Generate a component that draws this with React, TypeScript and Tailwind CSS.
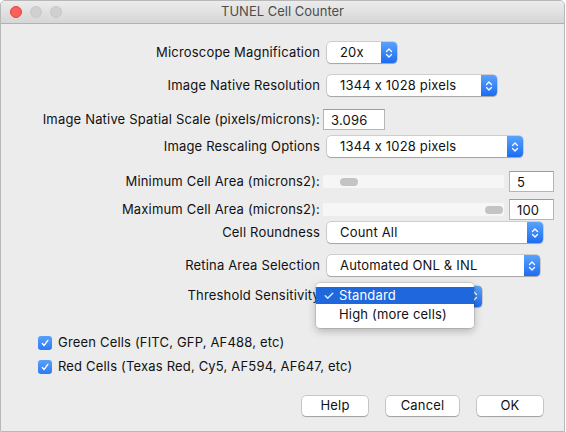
import React from "react";

const font = { fontFamily: "Inter, 'Liberation Sans', sans-serif" };

function Chevrons() {
  return (
    <svg width="8" height="12" viewBox="0 0 8 12" fill="none">
      <path d="M1.5 4.5 L4 2 L6.5 4.5" stroke="white" strokeWidth="1.3" strokeLinecap="round" strokeLinejoin="round" />
      <path d="M1.5 7.5 L4 10 L6.5 7.5" stroke="white" strokeWidth="1.3" strokeLinecap="round" strokeLinejoin="round" />
    </svg>
  );
}

function Popup({ text, w }: { text: string; w: string }) {
  return (
    <div className={`flex h-[21px] ${w} ml-[7px] rounded-[4px] bg-white shadow-[0_0_0_0.5px_rgba(0,0,0,0.25),0_1px_1px_rgba(0,0,0,0.2)]`}>
      <div className="flex-1 pl-[13px] leading-[21px] text-[13px] text-[#111]">{text}</div>
      <div className="flex w-[16px] items-center justify-center rounded-r-[4px] bg-gradient-to-b from-[#5aa2fb] to-[#1a6cf2]">
        <Chevrons />
      </div>
    </div>
  );
}

function Field({ text, w, ml }: { text: string; w: string; ml: string }) {
  return (
    <div className={`h-[21px] ${w} ${ml} border border-[#b5b5b5] border-t-[#9c9c9c] bg-white pl-[7px] leading-[20px] text-[13px] text-[#111]`}>
      {text}
    </div>
  );
}

function Label({ children }: { children: React.ReactNode }) {
  return <div className="w-[319px] shrink-0 text-right text-[13px] text-[#111]">{children}</div>;
}

function Slider({ pos }: { pos: "min" | "max" }) {
  return (
    <div className={`ml-[3px] flex h-[13px] w-[181px] items-center bg-[#f6f6f6] ${pos === "min" ? "justify-start pl-[17px]" : "justify-end pr-[1px]"}`}>
      <div className="h-[8px] w-[18px] rounded-full bg-[#c4c4c4]" />
    </div>
  );
}

function CheckRow({ text }: { text: string }) {
  return (
    <div className="flex h-[14px] items-center">
      <div className="flex h-[14px] w-[14px] items-center justify-center rounded-[3px] bg-gradient-to-b from-[#59a1fa] to-[#2a7bf3]">
        <svg width="10" height="10" viewBox="0 0 10 10" fill="none">
          <path d="M2.3 5.4 L4.2 7.4 L7.8 2.4" stroke="white" strokeWidth="1.4" strokeLinecap="round" strokeLinejoin="round" />
        </svg>
      </div>
      <span className="ml-[6px] text-[13px] text-[#111]">{text}</span>
    </div>
  );
}

function Button({ text, w }: { text: string; w: string }) {
  return (
    <div className={`flex h-[20px] ${w} items-center justify-center rounded-[4px] bg-white text-[13px] text-[#111] shadow-[0_0_0_0.5px_rgba(0,0,0,0.3),0_1px_1px_rgba(0,0,0,0.2)]`}>
      {text}
    </div>
  );
}

export default function App() {
  return (
    <div style={font} className="h-[432px] w-[566px] overflow-hidden bg-white tracking-[0.18px] [font-feature-settings:'calt'_0]">
      <div className="relative h-[432px] w-[565px] overflow-hidden rounded-t-[5px] border border-[#b8b8b8] bg-[#ececec]">
        {/* TITLE BAR */}
        <div className="relative flex h-[23px] items-center justify-center border-b border-[#b1b1b1] bg-gradient-to-b from-[#ececec] to-[#d6d6d6]">
          <div className="absolute left-[9px] top-[5px] flex gap-[8px]">
            <div className="h-[12px] w-[12px] rounded-full border border-[#e0443e] bg-[#fc605c]" />
            <div className="h-[12px] w-[12px] rounded-full border border-[#c8c8c8] bg-[#d0d0d0]" />
            <div className="h-[12px] w-[12px] rounded-full border border-[#c8c8c8] bg-[#d0d0d0]" />
          </div>
          <span className="text-[13px] tracking-normal text-[#4d4d4d]">TUNEL Cell Counter</span>
        </div>

        {/* FORM */}
        <div className="flex flex-col pt-[18px]">
          <div className="flex h-[21px] items-center">
            <Label>Microscope Magnification</Label>
            <Popup text="20x" w="w-[70px]" />
          </div>
          <div className="mt-[12px] flex h-[21px] items-center">
            <Label>Image Native Resolution</Label>
            <Popup text="1344 x 1028 pixels" w="w-[170px]" />
          </div>
          <div className="mt-[13px] flex h-[21px] items-center">
            <Label>Image Native Spatial Scale (pixels/microns):</Label>
            <Field text="3.096" w="w-[62px]" ml="ml-[3px]" />
          </div>
          <div className="mt-[6px] flex h-[21px] items-center">
            <Label>Image Rescaling Options</Label>
            <Popup text="1344 x 1028 pixels" w="w-[196px]" />
          </div>
          <div className="mt-[14px] flex h-[21px] items-center">
            <Label>Minimum Cell Area (microns2):</Label>
            <Slider pos="min" />
            <Field text="5" w="w-[45px]" ml="ml-[5px]" />
          </div>
          <div className="mt-[7px] flex h-[21px] items-center">
            <Label>Maximum Cell Area (microns2):</Label>
            <Slider pos="max" />
            <Field text="100" w="w-[45px]" ml="ml-[5px]" />
          </div>
          <div className="mt-[2px] flex h-[21px] items-center">
            <Label>Cell Roundness</Label>
            <Popup text="Count All" w="w-[216px]" />
          </div>
          <div className="mt-[12px] flex h-[21px] items-center">
            <Label>Retina Area Selection</Label>
            <Popup text="Automated ONL & INL" w="w-[213px]" />
          </div>
          <div className="mt-[9px] flex h-[22px] items-center">
            <Label>Threshold Sensitivity</Label>
            <Popup text="Standard" w="w-[155px]" />
          </div>

          {/* CHECKBOXES */}
          <div className="mt-[29px] flex flex-col gap-[10px] pl-[37px]">
            <CheckRow text="Green Cells (FITC, GFP, AF488, etc)" />
            <CheckRow text="Red Cells (Texas Red, Cy5, AF594, AF647, etc)" />
          </div>

          {/* BUTTONS */}
          <div className="mt-[22px] flex justify-end gap-[18px] pr-[21px]">
            <Button text="Help" w="w-[66px]" />
            <Button text="Cancel" w="w-[73px]" />
            <Button text="OK" w="w-[66px]" />
          </div>
        </div>

        {/* OPEN MENU */}
        <div className="absolute left-[315px] top-[282px] w-[158px] rounded-[4px] bg-white py-[4px] text-[13px] text-[#111] shadow-[0_0_0_0.5px_rgba(0,0,0,0.2),0_3px_8px_rgba(0,0,0,0.25)]">
          <div className="flex h-[17px] items-center bg-[#1f67dc] text-white">
            <span className="w-[23px] pl-[7px]">✓</span>
            <span>Standard</span>
          </div>
          <div className="mt-[1px] flex h-[19px] items-center">
            <span className="w-[23px]" />
            <span>High (more cells)</span>
          </div>
        </div>
      </div>
    </div>
  );
}
